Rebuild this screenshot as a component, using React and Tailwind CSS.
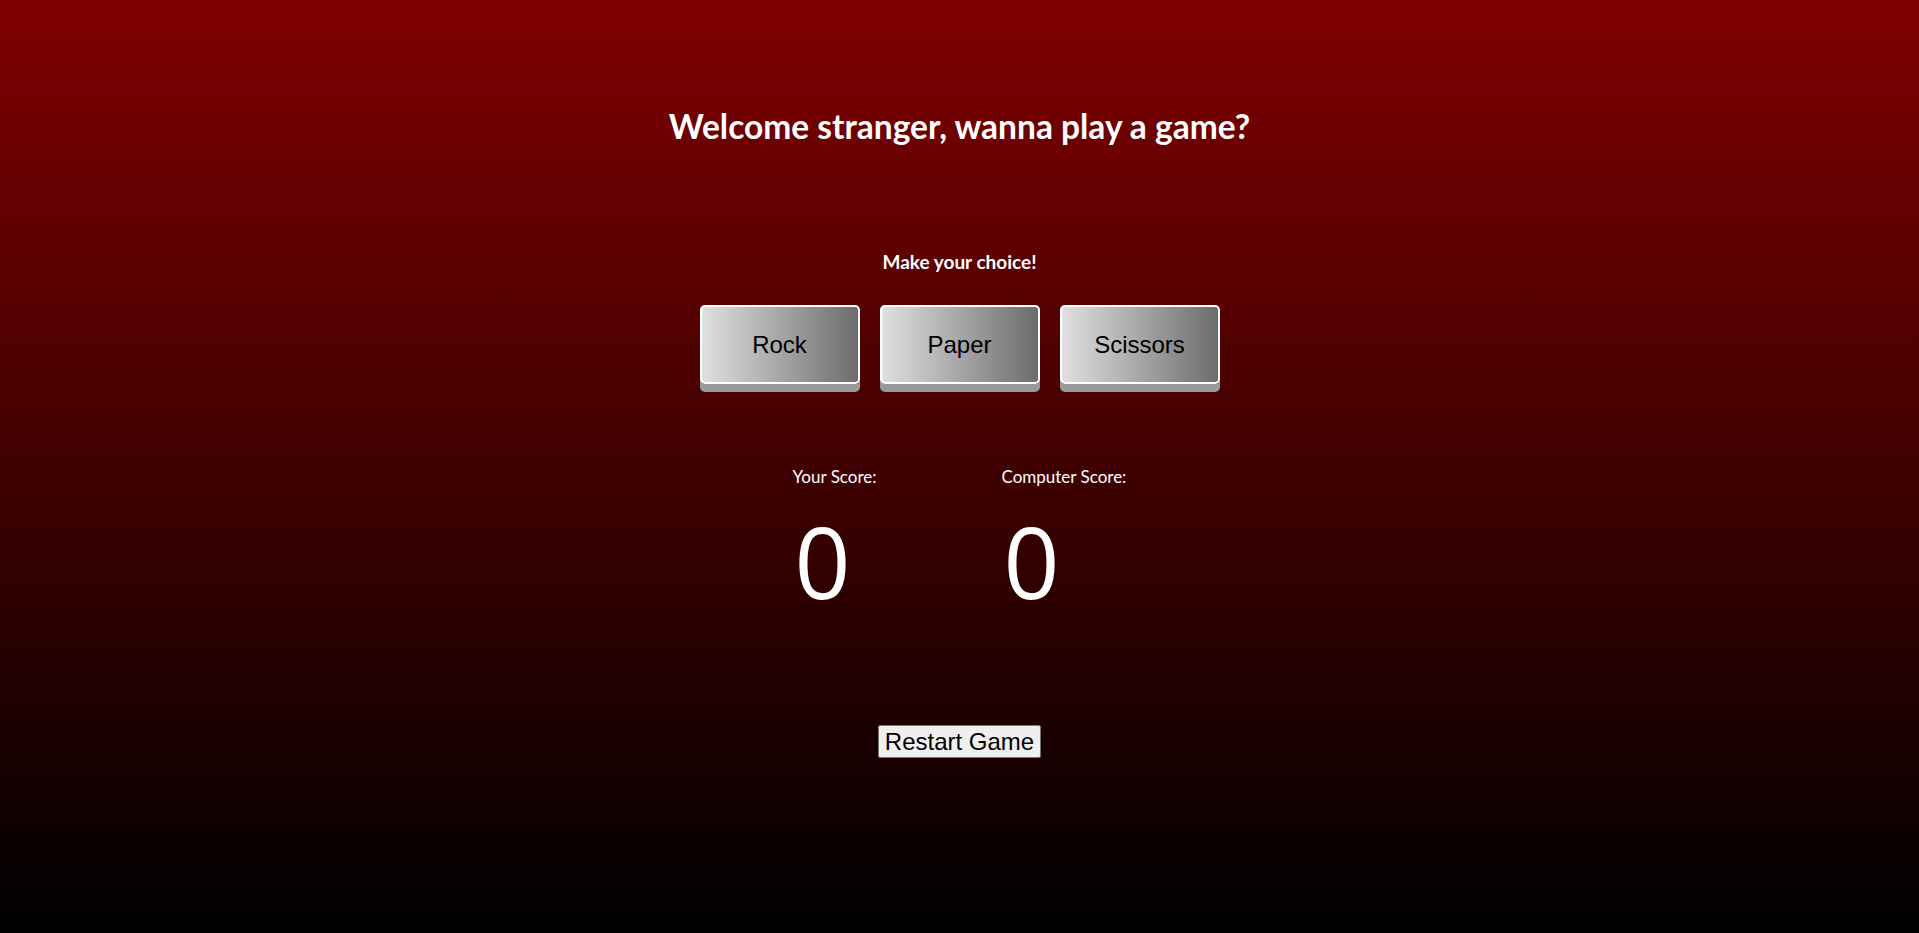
import React, { useState } from 'react';

const choices = ['Rock', 'Paper', 'Scissors'];

export default function App() {
    const [playerScore, setPlayerScore] = useState(0);
    const [computerScore, setComputerScore] = useState(0);

    const play = (choice) => {
        const pick = choices[Math.floor(Math.random() * 3)];
        if (pick === choice) return;
        const wins =
            (choice === 'Rock' && pick === 'Scissors') ||
            (choice === 'Paper' && pick === 'Rock') ||
            (choice === 'Scissors' && pick === 'Paper');
        if (wins) setPlayerScore((s) => s + 1);
        else setComputerScore((s) => s + 1);
    };

    const restart = () => {
        setPlayerScore(0);
        setComputerScore(0);
    };

    return (
        <div className="min-h-screen w-full bg-[linear-gradient(to_bottom,#800000,#000000)] text-white font-['Lato',sans-serif] flex flex-col items-center">
            {/* Title */}
            <h1 className="mt-[104px] text-[33.5px] leading-[44px] font-bold">
                Welcome stranger, wanna play a game?
            </h1>

            <p className="mt-[102px] text-[19px] leading-[24px] font-bold">Make your choice!</p>

            {/* Choice buttons */}
            <div className="mt-[31px] flex gap-[20px]">
                {choices.map((c) => (
                    <button
                        key={c}
                        onClick={() => play(c)}
                        className="w-[160px] h-[79px] pt-[1px] rounded-[5px] border-2 border-white bg-[linear-gradient(to_right,#e0e0e0,#6c6c6c)] shadow-[0_8px_0_#9a9a9a] text-black text-[24px] font-['Liberation_Sans',Arial,sans-serif]"
                    >
                        {c}
                    </button>
                ))}
            </div>

            {/* Scores */}
            <div className="mt-[82px] flex gap-[125px]">
                <div className="flex flex-col items-start">
                    <span className="text-[17px] leading-[22px]">Your Score:</span>
                    <span className="mt-[23px] ml-[2px] text-[98px] leading-[100px] font-['Open_Sans',sans-serif]">{playerScore}</span>
                </div>
                <div className="flex flex-col items-start">
                    <span className="text-[17px] leading-[22px]">Computer Score:</span>
                    <span className="mt-[23px] ml-[2px] text-[98px] leading-[100px] font-['Open_Sans',sans-serif]">{computerScore}</span>
                </div>
            </div>

            <button
                onClick={restart}
                className="mt-[114px] px-[6px] py-[1px] bg-[#efefef] border border-[#767676] rounded-[2px] text-black text-[24px] leading-[29px] font-['Liberation_Sans',Arial,sans-serif]"
            >
                Restart Game
            </button>
        </div>
    );
}
